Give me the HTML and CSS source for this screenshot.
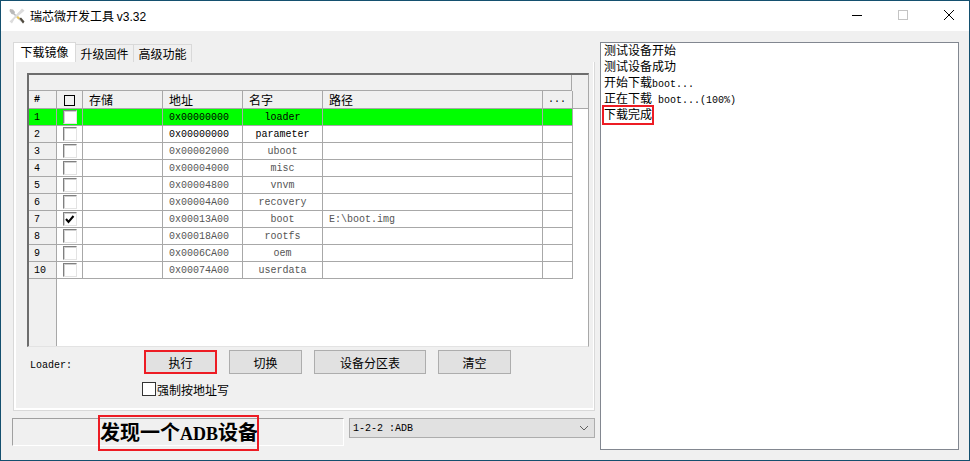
FILE: index.html
```html
<!DOCTYPE html>
<html lang="zh">
<head>
<meta charset="utf-8">
<title>瑞芯微开发工具 v3.32</title>
<link rel="stylesheet" href="styles.css">
</head>
<body>
<div class="window">
  <header class="titlebar">
    <svg class="app-icon" width="16" height="16" viewBox="0 0 16 16">
      <path d="M1 1 L4 1.500 L6 4 L5.500 5.500 L15 14 L14 15.500 L4.500 6.500 L2.500 6 L0.500 3 Z" fill="#b9b9b9"/>
      <path d="M13 0.500 L15.500 2.500 L14 4 L5.500 11 L3 15.500 L0.500 13.500 L4 10 Z" fill="#dcdcdc"/>
      <path d="M9 8 L11 10 L9.500 11.500 L7.500 9.500 Z" fill="#e9c65a"/>
      <path d="M10.500 10.500 L12 9.500 L15.500 13.500 L14 15.500 Z" fill="#4f4a3e"/>
    </svg>
    <span class="title-text">瑞芯微开发工具 <span class="title-ver">v3.32</span></span>
    <div class="caption">
      <svg class="cap-btn" width="46" height="30" viewBox="0 0 46 30"><path d="M18 14.500 H28" stroke="#000" fill="none"/></svg>
      <svg class="cap-btn" width="46" height="30" viewBox="0 0 46 30"><rect x="18.500" y="9.500" width="9" height="9" stroke="#c4c4c4" fill="none"/></svg>
      <svg class="cap-btn" width="46" height="30" viewBox="0 0 46 30"><path d="M18 9 L28 19 M28 9 L18 19" stroke="#000" fill="none"/></svg>
    </div>
  </header>
  <main class="client">
    <section class="left">
      <nav class="tabs">
        <span class="tab tab-active">下载镜像</span>
        <span class="tab">升级固件</span>
        <span class="tab">高级功能</span>
      </nav>
      <div class="panel">
        <div class="grid">
          <div class="grid-band"></div>
          <table class="table">
            <colgroup>
              <col class="c-num"><col class="c-chk"><col class="c-store"><col class="c-addr"><col class="c-name"><col class="c-path"><col class="c-more"><col class="c-fill">
            </colgroup>
            <thead>
              <tr>
                <th class="num mono-b">#</th>
                <th class="chk"><span class="head-box"></span></th>
                <th>存储</th><th>地址</th><th>名字</th><th>路径</th>
                <th class="more mono">...</th>
                <th class="fill"></th>
              </tr>
            </thead>
            <tbody>
              <tr class="row-sel">
                <th class="num mono">1</th><td class="chk"><span class="box"></span></td><td></td>
                <td class="addr">0x00000000</td><td class="name">loader</td><td></td><td></td><td class="fill"></td>
              </tr>
              <tr class="row-on">
                <th class="num mono">2</th><td class="chk"><span class="box"></span></td><td></td>
                <td class="addr">0x00000000</td><td class="name">parameter</td><td></td><td></td><td class="fill"></td>
              </tr>
              <tr>
                <th class="num mono">3</th><td class="chk"><span class="box"></span></td><td></td>
                <td class="addr">0x00002000</td><td class="name">uboot</td><td></td><td></td><td class="fill"></td>
              </tr>
              <tr>
                <th class="num mono">4</th><td class="chk"><span class="box"></span></td><td></td>
                <td class="addr">0x00004000</td><td class="name">misc</td><td></td><td></td><td class="fill"></td>
              </tr>
              <tr>
                <th class="num mono">5</th><td class="chk"><span class="box"></span></td><td></td>
                <td class="addr">0x00004800</td><td class="name">vnvm</td><td></td><td></td><td class="fill"></td>
              </tr>
              <tr>
                <th class="num mono">6</th><td class="chk"><span class="box"></span></td><td></td>
                <td class="addr">0x00004A00</td><td class="name">recovery</td><td></td><td></td><td class="fill"></td>
              </tr>
              <tr>
                <th class="num mono">7</th><td class="chk"><span class="box box-on">
                  <svg width="10" height="9" viewBox="0 0 10 9"><path d="M1 4 L3.500 7 L8.500 1" stroke="#000" stroke-width="2" fill="none"/></svg>
                </span></td><td></td>
                <td class="addr">0x00013A00</td><td class="name">boot</td><td class="path">E:\boot.img</td><td></td><td class="fill"></td>
              </tr>
              <tr>
                <th class="num mono">8</th><td class="chk"><span class="box"></span></td><td></td>
                <td class="addr">0x00018A00</td><td class="name">rootfs</td><td></td><td></td><td class="fill"></td>
              </tr>
              <tr>
                <th class="num mono">9</th><td class="chk"><span class="box"></span></td><td></td>
                <td class="addr">0x0006CA00</td><td class="name">oem</td><td></td><td></td><td class="fill"></td>
              </tr>
              <tr>
                <th class="num mono">10</th><td class="chk"><span class="box"></span></td><td></td>
                <td class="addr">0x00074A00</td><td class="name">userdata</td><td></td><td></td><td class="fill"></td>
              </tr>
              <tr class="filler">
                <th class="num"></th><td colspan="7"></td>
              </tr>
            </tbody>
          </table>
        </div>
        <div class="actions">
          <span class="loader">Loader:</span>
          <button class="btn btn-mark">执行</button>
          <button class="btn">切换</button>
          <button class="btn btn-wide">设备分区表</button>
          <button class="btn">清空</button>
        </div>
        <label class="force"><span class="force-box"></span>强制按地址写</label>
      </div>
      <div class="bottom">
        <div class="status">
          <span class="status-text">发现一个<span class="status-latin">ADB</span>设备</span>
          <span class="status-mark"></span>
        </div>
        <div class="combo">
          <span class="combo-text">1-2-2 :ADB</span>
          <svg width="10" height="6" viewBox="0 0 10 6"><path d="M1 1 L5 5 L9 1" stroke="#606060" fill="none"/></svg>
        </div>
      </div>
    </section>
    <aside class="log">
      <div class="log-line">测试设备开始</div>
      <div class="log-line">测试设备成功</div>
      <div class="log-line">开始下载<span class="mono">boot...</span></div>
      <div class="log-line">正在下载<span class="mono"> boot...(100%)</span></div>
      <div class="log-line"><span class="log-mark">下载完成</span></div>
    </aside>
  </main>
</div>
</body>
</html>
```
FILE: styles.css
```css
html, body {
  margin: 0;
  padding: 0;
  background: #f0f0f0;
}

body {
  font-family: "Noto Sans CJK SC", "Liberation Sans", sans-serif;
  font-size: 12px;
  color: #000;
}

.window {
  width: 970px;
  height: 461px;
  box-sizing: border-box;
  border: 1px solid #14506f;
  display: flex;
  flex-direction: column;
  overflow: hidden;
}

.titlebar {
  height: 30px;
  flex: none;
  background: #fff;
  display: flex;
  align-items: center;
  padding-left: 8px;
}

.app-icon {
  margin-right: 5px;
}

.title-text {
  font-size: 12px;
  line-height: 30px;
}

.title-ver {
  font-family: "Liberation Sans", sans-serif;
}

.caption {
  margin-left: auto;
  display: flex;
  margin-right: -3px;
}

.cap-btn {
  display: block;
}

.client {
  flex: 1;
  display: flex;
  padding: 11px 10px 0 12px;
  gap: 5px;
  background: #f0f0f0;
}

.left {
  width: 582px;
  flex: none;
}

.tabs {
  display: flex;
  height: 20px;
  align-items: flex-end;
}

.tab {
  height: 18px;
  line-height: 17px;
  box-sizing: border-box;
  padding: 0 3px;
  width: 58px;
  text-align: center;
  border: 1px solid #d9d9d9;
  border-bottom: none;
  border-left: none;
}

.tab-active {
  height: 20px;
  width: 63px;
  line-height: 18px;
  background: #fff;
  border-left: 1px solid #d9d9d9;
  border-top: 1px solid #d9d9d9;
}

.panel {
  box-sizing: border-box;
  height: 349px;
  background: #f0f0f0;
  border: 1px solid #d9d9d9;
  border-top: none;
  box-shadow: inset 2px 0 0 #fff, inset -1px 0 0 #fff, inset 0 -2px 0 #fff;
  padding: 11px 5px 0 13px;
}

.grid {
  width: 562px;
  height: 274px;
  box-sizing: border-box;
  border-top: 2px solid #6d6d6d;
  border-left: 2px solid #6d6d6d;
  border-right: 1px solid #a8a8a8;
  border-bottom: 1px solid #e3e3e3;
  background: #fff;
}

.grid-band {
  height: 15px;
  background: linear-gradient(to right, transparent 542px, #a8a8a8 542px, #a8a8a8 543px, transparent 543px), #f0f0f0;
  border-bottom: 1px solid #a8a8a8;
  margin-right: 16px;
  box-shadow: 16px 0 0 #f0f0f0;
}

.table {
  border-collapse: separate;
  border-spacing: 0;
  table-layout: fixed;
  width: 559px;
}

.c-num { width: 28px; }
.c-chk { width: 26px; }
.c-store, .c-addr, .c-name { width: 80px; }
.c-path { width: 220px; }
.c-more { width: 30px; }
.c-fill { width: 15px; }

.table th,
.table td {
  padding: 1px 0 0;
  height: 15px;
  line-height: 15px;
  box-sizing: content-box;
  border-right: 1px solid #a8a8a8;
  border-bottom: 1px solid #a8a8a8;
  overflow: hidden;
  white-space: nowrap;
  font-weight: 400;
}

.table thead th {
  background: #f0f0f0;
  text-align: left;
  padding: 1px 0 0 6px;
  height: 16px;
  line-height: 16px;
}

.table thead th.chk {
  padding-left: 0;
  text-align: center;
}

.table thead th.more {
  padding-left: 5px;
}

.table .fill {
  border-right: none;
  border-bottom: none;
}

.table thead th.fill {
  background: #f0f0f0;
  padding-left: 0;
  border-bottom: 1px solid #a8a8a8;
}

.table tbody th.num,
.table thead th.num {
  background: #f0f0f0;
  text-align: left;
  padding-left: 5px;
}

.mono {
  font-family: "Liberation Mono", monospace;
  font-size: 10px;
}

.mono-b {
  font-family: "Liberation Mono", monospace;
  font-size: 10px;
  font-weight: 700 !important;
}

.head-box {
  display: inline-block;
  width: 9px;
  height: 9px;
  border: 1px solid #000;
  vertical-align: middle;
  margin-top: -2px;
}

.table td.chk {
  padding: 1px 0 0 6px;
  line-height: 0;
  vertical-align: top;
}

.box {
  display: inline-flex;
  vertical-align: top;
  align-items: center;
  justify-content: center;
  box-sizing: border-box;
  width: 14px;
  height: 14px;
  background: #fff;
  border-style: solid;
  border-width: 1px;
  border-color: #808080 #e3e3e3 #e3e3e3 #808080;
  box-shadow: inset 1px 1px 0 #d0d0d0;
}

.addr,
.name,
.path {
  font-family: "Liberation Mono", monospace;
  font-size: 10px;
  color: #555;
}

.table td.addr,
.table td.path {
  padding-left: 6px;
}

.table td.name {
  text-align: center;
}

.row-sel td:not(.fill) {
  background: #00ff00;
}

.table tbody .row-sel th.num {
  background: #00ff00;
}

.row-sel .addr,
.row-sel .name,
.row-on .addr,
.row-on .name {
  color: #000;
}

.table .filler th.num {
  height: 66px;
  border-bottom: none;
}

.table .filler td {
  border: none;
}

.actions {
  display: flex;
  align-items: flex-start;
  gap: 12px;
  margin-top: 3px;
}

.loader {
  font-family: "Liberation Mono", monospace;
  font-size: 10px;
  line-height: 14px;
  width: 102px;
  padding-left: 3px;
  margin-top: 9px;
}

.btn {
  font: inherit;
  width: 73px;
  height: 24px;
  padding: 0;
  background: #e1e1e1;
  border: 1px solid #adadad;
  color: #000;
}

.btn-wide {
  width: 112px;
}

.btn-mark {
  border: 2px solid #ed1c24;
}

.force {
  display: flex;
  align-items: center;
  margin: 8px 0 0 115px;
  height: 14px;
}

.force-box {
  width: 12px;
  height: 12px;
  border: 1px solid #333;
  background: #fff;
  margin-right: 1px;
}

.bottom {
  display: flex;
  margin-top: 7px;
  margin-left: -1px;
  gap: 5px;
  align-items: flex-start;
}

.status {
  position: relative;
  width: 332px;
  height: 28px;
  box-sizing: border-box;
  border-style: solid;
  border-width: 1px;
  border-color: #a0a0a0 #fff #fff #a0a0a0;
}

.status-text {
  position: absolute;
  left: 87px;
  top: 0;
  font-size: 20px;
  line-height: 26px;
  font-weight: 700;
  white-space: nowrap;
}

.status-latin {
  font-family: "Liberation Serif", serif;
  font-size: 18px;
}

.status-mark {
  position: absolute;
  left: 85px;
  top: -4px;
  width: 161px;
  height: 36px;
  box-sizing: border-box;
  border: 2px solid #ed1c24;
}

.combo {
  width: 246px;
  height: 20px;
  box-sizing: border-box;
  background: #e1e1e1;
  border: 1px solid #adadad;
  display: flex;
  align-items: center;
  justify-content: space-between;
  padding: 0 5px 0 3px;
}

.combo-text {
  font-family: "Liberation Mono", monospace;
  font-size: 10px;
}

.log {
  box-sizing: border-box;
  width: 359px;
  height: 408px;
  background: #fff;
  border: 1px solid #828790;
  padding: 0 0 0 3px;
}

.log-line {
  height: 16px;
  line-height: 14px;
  white-space: nowrap;
}

.log-mark {
  display: inline-block;
  height: 16px;
  outline: 2px solid #ed1c24;
}
```
